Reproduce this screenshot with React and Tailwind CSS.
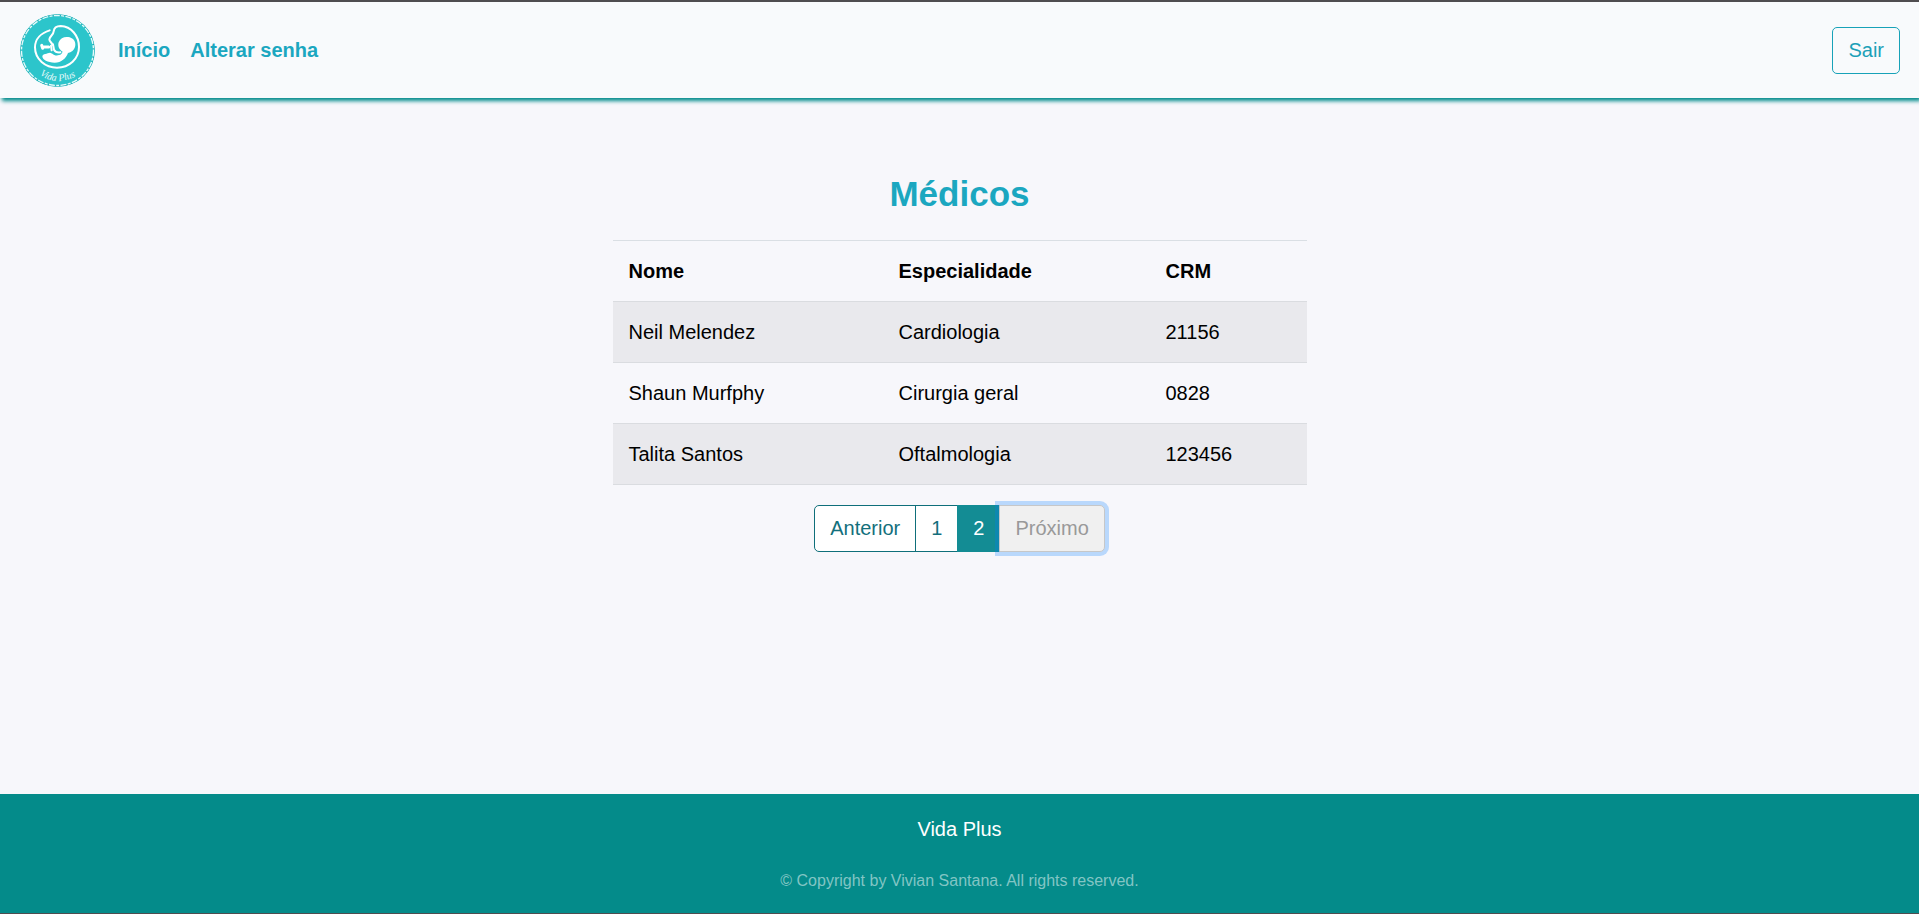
import React from 'react';

const navLinks = [
    { label: 'Início', href: '#inicio' },
    { label: 'Alterar senha', href: '#senha' },
];

const doctors = [
    { name: 'Neil Melendez', specialty: 'Cardiologia', crm: '21156' },
    { name: 'Shaun Murfphy', specialty: 'Cirurgia geral', crm: '0828' },
    { name: 'Talita Santos', specialty: 'Oftalmologia', crm: '123456' },
];

const Logo = () => (
    <svg viewBox="30 24 225 219" className="block w-[75px] h-[73px]" role="img" aria-label="Vida Plus">
        <ellipse cx="142.5" cy="133.5" rx="112" ry="109" fill="#2cc5cb" />
        <ellipse cx="142.5" cy="133.5" rx="110" ry="107" fill="none" stroke="#1fa9b0" strokeWidth="3" />
        <ellipse cx="142.5" cy="133.5" rx="108" ry="105" fill="none" stroke="#e6fafa" strokeWidth="4" strokeDasharray="18 4 9 4" />
        {/* Womb and cord */}
        <path
            d="M119 73 C94 81 75 99 75 124 C75 160 106 185 141 185 C178 185 207 158 207 123 C207 90 184 61 152 60 C138 60 132 67 131 76 C130 88 119 90 118 100 C118 107 125 108 127 116"
            fill="none"
            stroke="#fff"
            strokeWidth="6"
            strokeLinecap="round"
        />
        {/* Baby */}
        <path
            d="M146 109 C151 95 166 90 179 94 C193 98 199 111 195 123 C192 133 184 139 174 141 C168 157 154 170 134 170 C113 170 97 161 97 151 C98 143 112 143 120 140 L127 143 C134 150 145 150 154 144 L158 137 C149 132 142 122 146 109 Z"
            fill="#fff"
        />
        <path d="M95 118 L98 127 M97 123 L116 123" fill="none" stroke="#fff" strokeWidth="9" strokeLinecap="round" strokeLinejoin="round" />
        <path d="M129 115 L132 131 C136 138 143 140 151 139" fill="none" stroke="#fff" strokeWidth="6" strokeLinecap="round" />
        <path d="M123 119 L125 133" fill="none" stroke="#fff" strokeWidth="6" strokeLinecap="round" />
        <path id="logo-arc" d="M86 204 Q141 245 206 206" fill="none" />
        <text fill="#e6fafa" fontSize="30" className="font-['Liberation_Serif',serif] italic">
            <textPath href="#logo-arc" startOffset="3">Vida Plus</textPath>
        </text>
    </svg>
);

const Header = () => (
    <header className="flex items-center justify-between h-[98px] pl-5 pr-[19px] border-t-2 border-[#4f4d50] bg-[#f8fafc] shadow-[2px_3px_4px_#008b8b]">
        <div className="flex items-center">
            <a href="#inicio">
                <Logo />
            </a>
            <nav className="flex gap-5 ml-[23px] font-bold text-[#1ba7c0]">
                {navLinks.map((link) => (
                    <a key={link.href} href={link.href}>{link.label}</a>
                ))}
            </nav>
        </div>
        <button className="px-[15px] py-[10px] leading-[25px] rounded-[5px] border border-[#17a2b8] text-[#1ba0b8]">
            Sair
        </button>
    </header>
);

const DoctorsTable = () => (
    <table className="w-full max-w-[694px] mx-auto text-left text-black border-b border-[#dadce0]">
        <thead>
            <tr className="border-t border-[#dadfe4]">
                <th className="w-[270px] px-4 py-[15px]">Nome</th>
                <th className="w-[267px] px-4 py-[15px]">Especialidade</th>
                <th className="px-4 py-[15px]">CRM</th>
            </tr>
        </thead>
        <tbody>
            {doctors.map((doctor) => (
                <tr key={doctor.crm} className="border-t border-[#dadce0] odd:bg-[#e9e9ed]">
                    <td className="px-4 py-[15px]">{doctor.name}</td>
                    <td className="px-4 py-[15px]">{doctor.specialty}</td>
                    <td className="px-4 py-[15px]">{doctor.crm}</td>
                </tr>
            ))}
        </tbody>
    </table>
);

const Pagination = () => (
    <nav className="flex justify-center mt-5 leading-[25px]" aria-label="Paginação">
        <button className="px-[15px] py-[10px] border border-[#0f6f7a] rounded-l-[5px] bg-white text-[#136f7c]">
            Anterior
        </button>
        <button className="-ml-px px-[15px] py-[10px] border border-[#0f6f7a] bg-white text-[#136f7c]">1</button>
        <button className="-ml-px px-[15px] py-[10px] border border-[#138c94] bg-[#138c94] text-white" aria-current="page">
            2
        </button>
        <button
            className="relative z-10 -ml-px px-[15px] py-[10px] border border-[#c6c7c8] rounded-r-[5px] bg-[#f0f0f0] text-[#999] shadow-[0_0_0_4px_rgba(0,123,255,0.25)]"
            disabled
        >
            Próximo
        </button>
    </nav>
);

const App = () => {
    return (
        <div className="flex flex-col min-h-screen bg-[#f7f7fb] font-['Liberation_Sans',Arial,sans-serif] text-[20px] leading-[30px]">
            <Header />
            <main className="flex-1 pt-[75px] px-5">
                <h1 className="mb-[25px] text-center text-[35px] leading-[42px] font-bold text-[#1ba7c0]">Médicos</h1>
                <DoctorsTable />
                <Pagination />
            </main>
            <footer className="pt-5 pb-5 border-b border-[#4f4d50] bg-[#048b8a] text-center">
                <p className="text-white">Vida Plus</p>
                <p className="mt-[25px] text-base text-[#82c5c4]">
                    © Copyright by Vivian Santana. All rights reserved.
                </p>
            </footer>
        </div>
    );
};

export default App;
